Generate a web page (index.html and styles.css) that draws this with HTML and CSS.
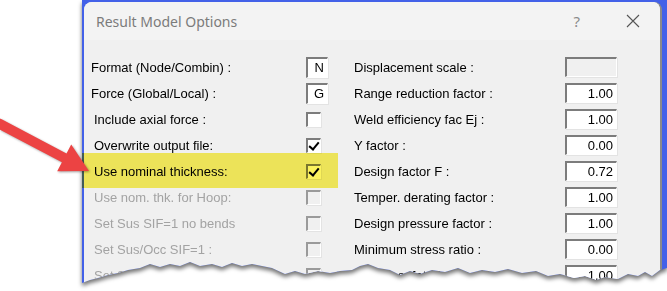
FILE: index.html
```html
<!DOCTYPE html>
<html lang="en">

<head>
    <meta charset="UTF-8">
    <title>Result Model Options</title>
    <link rel="stylesheet" href="styles.css">
</head>

<body>
    <div class="shot">
        <div class="paper">
            <div class="frame">
                <div class="dialog">
                    <div class="titlebar">
                        <span class="title">Result Model Options</span>
                        <span class="help">?</span>
                        <span class="close">
                            <svg width="14" height="14" viewBox="0 0 14 14">
                                <path d="M1 1 L13 13 M13 1 L1 13" stroke="#555" stroke-width="1.1" fill="none" />
                            </svg>
                        </span>
                    </div>
                    <div class="options">
                        <div class="col left">
                            <div class="row"><span class="label">Format (Node/Combin) :</span><span class="letter">N</span></div>
                            <div class="row"><span class="label">Force (Global/Local) :</span><span class="letter">G</span></div>
                            <div class="row check"><span class="label">Include axial force :</span><span class="box"></span></div>
                            <div class="row check"><span class="label">Overwrite output file:</span><span class="box checked"></span></div>
                            <div class="row check"><span class="label">Use nominal thickness:</span><span class="box checked"></span></div>
                            <div class="row check off"><span class="label">Use nom. thk. for Hoop:</span><span class="box"></span></div>
                            <div class="row check off"><span class="label">Set Sus SIF=1 no bends</span><span class="box"></span></div>
                            <div class="row check off"><span class="label">Set Sus/Occ SIF=1 :</span><span class="box"></span></div>
                            <div class="row check off"><span class="label">Set Sus/Occ SIF=0.75i:</span><span class="box"></span></div>
                        </div>
                        <div class="col right">
                            <div class="row"><span class="label">Displacement scale :</span><span class="field empty"></span></div>
                            <div class="row"><span class="label">Range reduction factor :</span><span class="field">1.00</span></div>
                            <div class="row"><span class="label">Weld efficiency fac Ej :</span><span class="field">1.00</span></div>
                            <div class="row"><span class="label">Y factor :</span><span class="field">0.00</span></div>
                            <div class="row"><span class="label">Design factor F :</span><span class="field">0.72</span></div>
                            <div class="row"><span class="label">Temper. derating factor :</span><span class="field">1.00</span></div>
                            <div class="row"><span class="label">Design pressure factor :</span><span class="field">1.00</span></div>
                            <div class="row"><span class="label">Minimum stress ratio :</span><span class="field">0.00</span></div>
                            <div class="row"><span class="label">Design safety factor :</span><span class="field">1.00</span></div>
                        </div>
                    </div>
                </div>
            </div>
        </div>

        <!-- annotations drawn over the screenshot -->
        <div class="highlight"></div>
        <svg class="arrow" width="100" height="190" viewBox="0 0 100 190">
            <polygon points="0.3,118.6 66.5,153.5 71.2,144.6 89,171 57.2,171.2 61.9,162.3 -4.3,127.4" fill="#ec4343" />
        </svg>
    </div>
</body>

</html>
```

FILE: styles.css
```css
body {
    margin: 0;
    padding: 0;
    background-color: #ffffff;
    font-family: "Liberation Sans", Arial, sans-serif;
    overflow: hidden;
}

.shot {
    position: relative;
    width: 667px;
    height: 291px;
    padding-left: 82px;
    box-sizing: border-box;
}

.paper {
    filter: drop-shadow(0 3px 2px rgba(0, 0, 0, 0.55));
}

.frame {
    background-color: #4361e8;
    padding: 2px 5px 0 2px;
    height: 291px;
    box-sizing: border-box;
    clip-path: polygon(0 0, 585px 0, 585px 268px, 578px 270px, 570px 276px, 563px 272px, 556px 276px, 546px 274px, 536px 279px, 523px 277px, 514px 280px, 503px 276px, 492px 278px, 478px 274px, 466px 276px, 454px 271px, 440px 273px, 426px 269px, 413px 272px, 400px 270px, 388px 273px, 376px 268px, 363px 272px, 350px 270px, 338px 274px, 328px 271px, 318px 275px, 308px 270px, 296px 268px, 286px 264px, 278px 266px, 270px 270px, 258px 271px, 248px 273px, 236px 271px, 223px 274px, 213px 271px, 203px 274px, 190px 268px, 180px 266px, 170px 264px, 160px 266px, 150px 263px, 140px 267px, 130px 264px, 118px 266px, 108px 262px, 98px 266px, 88px 264px, 78px 267px, 68px 264px, 58px 268px, 46px 270px, 36px 273px, 26px 275px, 16px 278px, 8px 280px, 0 283px);
}

.dialog {
    background-color: #f0f0f0;
    height: 100%;
    border-radius: 8px 8px 0 0;
    border-right: 2px solid #8a8a8a;
}

.titlebar {
    height: 38px;
    background-color: #f3f3f3;
    display: flex;
    align-items: center;
    border-radius: 8px 8px 0 0;
    font-family: "Noto Sans", sans-serif;
    color: #7b7b7b;
}

.title {
    font-size: 14px;
    margin-left: 12px;
}

.help {
    margin-left: auto;
    font-size: 15px;
    color: #8a8a8a;
}

.close {
    display: flex;
    margin: 0 20px 0 46px;
}

.options {
    display: flex;
    padding-top: 14px;
    font-size: 13px;
    color: #000000;
}

.col.left {
    width: 254px;
}

.col.right {
    flex: 1;
}

.row {
    height: 26px;
    display: flex;
    align-items: center;
}

.left .label {
    width: 215px;
    padding-left: 7px;
}

.left .check .label {
    width: 212px;
    padding-left: 10px;
}

.right .label {
    width: 211px;
    padding-left: 16px;
}

.off .label {
    color: #a3a3a3;
}

.letter,
.field,
.box {
    box-sizing: border-box;
    background-color: #ffffff;
    border-style: solid;
    border-width: 2px 1px 1px 2px;
    border-color: #7c7c7c #ffffff #ffffff #7c7c7c;
    box-shadow: 1px 1px 0 #e3e3e3;
}

.letter {
    width: 22px;
    height: 21px;
    text-align: right;
    padding-right: 3px;
    line-height: 18px;
}

.field {
    width: 52px;
    height: 20px;
    text-align: right;
    padding-right: 3px;
    line-height: 17px;
}

.field.empty {
    background-color: #f0f0f0;
}

.box {
    width: 15px;
    height: 15px;
    position: relative;
}

.off .box {
    background-color: #f0f0f0;
    border-color: #9a9a9a #ffffff #ffffff #9a9a9a;
}

.box.checked::after {
    content: '';
    position: absolute;
    left: 3px;
    top: 0px;
    width: 4px;
    height: 8px;
    border: solid #000000;
    border-width: 0 2.5px 2.5px 0;
    transform: rotate(40deg);
}

.highlight {
    position: absolute;
    left: 82px;
    top: 153px;
    width: 256px;
    height: 35px;
    background-color: #fbf25e;
    mix-blend-mode: multiply;
}

.arrow {
    position: absolute;
    left: 0;
    top: 0;
    filter: drop-shadow(1px 1px 1px rgba(0, 0, 0, 0.35));
}
```
